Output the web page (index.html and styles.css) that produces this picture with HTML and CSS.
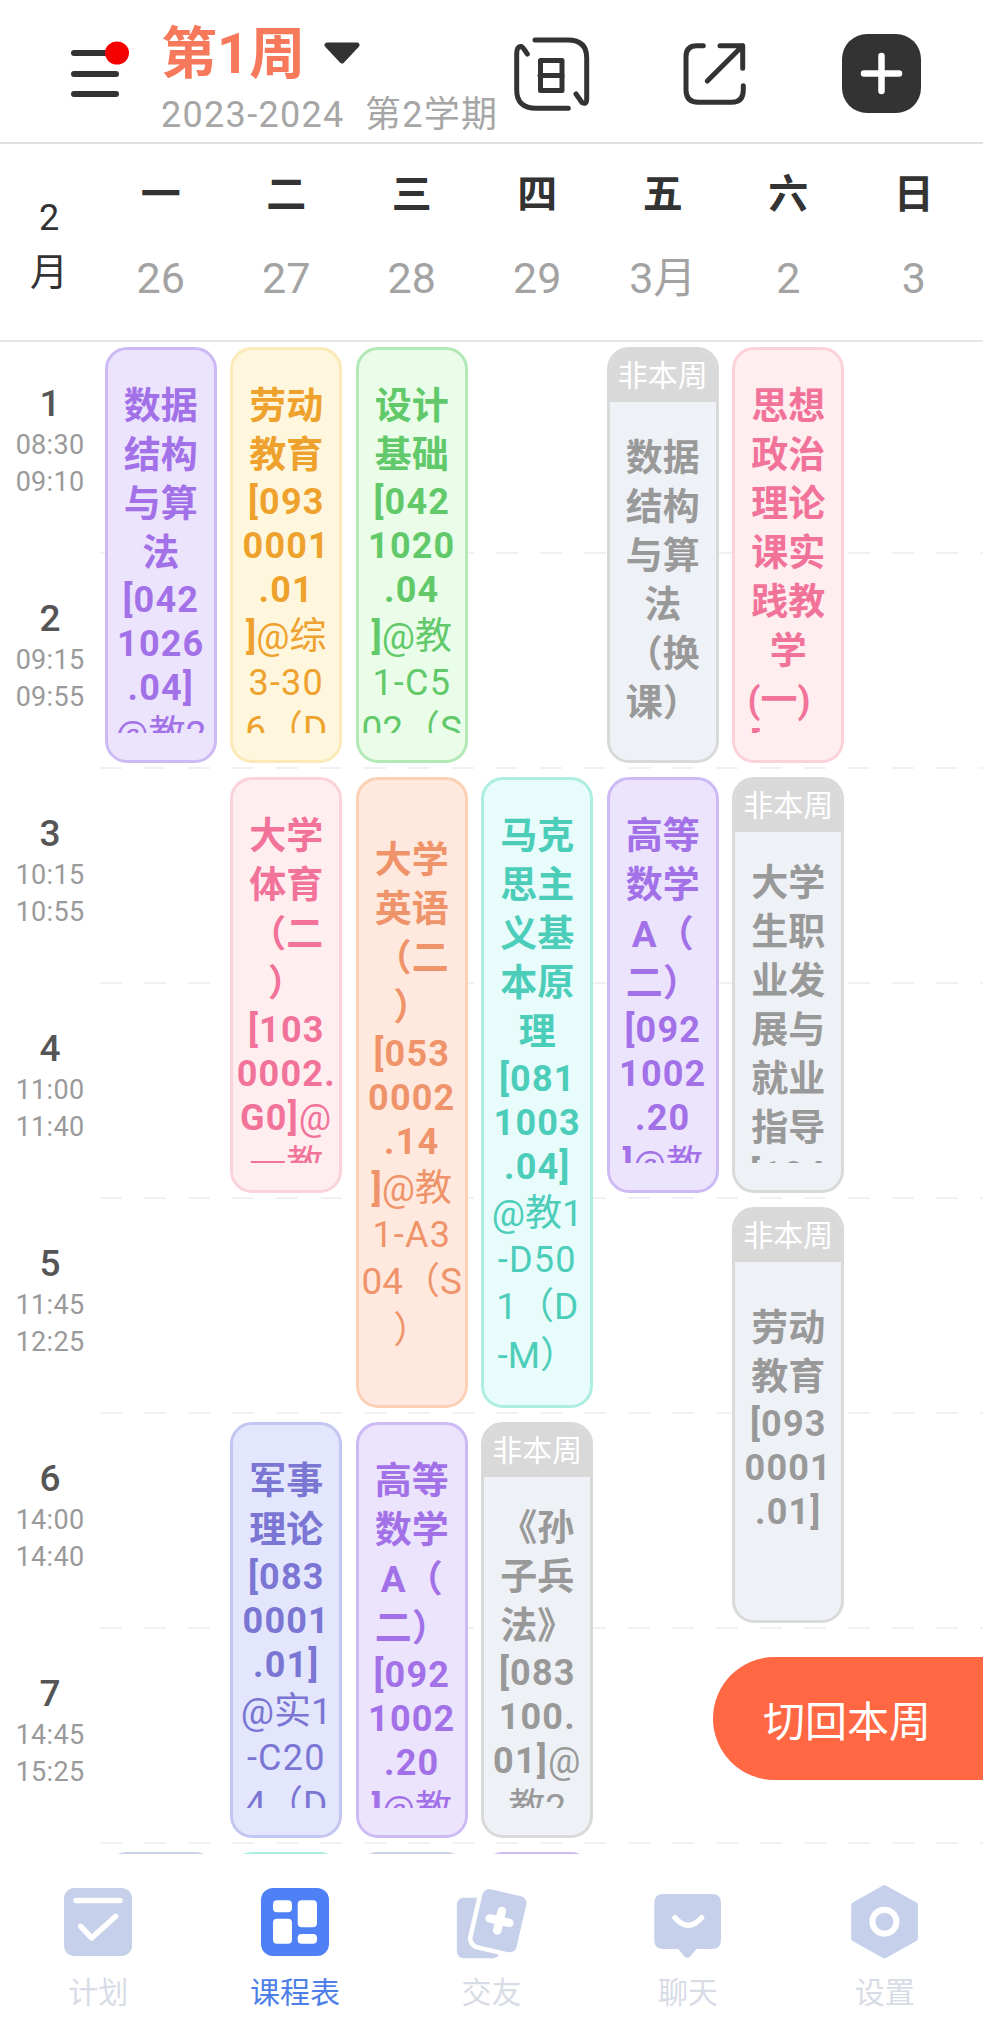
FILE: index.html
```html
<!DOCTYPE html>
<html lang="zh-CN">
<head>
<meta charset="utf-8">
<title>课程表</title>
<link rel="stylesheet" href="styles.css">
</head>
<body>
<div class="page">
  <header class="top">
    <svg class="menu" viewBox="0 0 62 66"><path class="menu-bars" d="M3 12H45M3 33H45M3 53H45"/><ellipse class="menu-dot" cx="46" cy="12" rx="12" ry="11.5"/></svg>
    <div class="heading">
      <div class="week-title"><span class="week-name">第1周</span><svg class="caret" viewBox="0 0 36 22"><polygon points="3,3 33,3 18,19"/></svg></div>
      <div class="term">2023-2024&nbsp;&nbsp;第2学期</div>
    </div>
    <div class="actions">
      <svg class="act act-swap" viewBox="0 0 84 80"><path d="M25 5H58Q76.7 5 76.7 23V64Q76.7 70 72 67.5L66 59M58.3 73.3H26Q6.7 73.3 6.7 55V19Q6.7 11 11 11.5Q13 12 17.3 19"/><rect x="30.5" y="25.5" width="21.5" height="30"/><path d="M30 40.500H52"/></svg>
      <svg class="act act-share" viewBox="0 0 70 70"><path d="M23.300 5.700H16.700Q6 5.700 6 16.700V50Q6 62.300 18.300 62.300H51.700Q63.300 62.300 63.300 50V45.700M27.300 41L62.700 5.700M40 5.700H62.700V28.300"/></svg>
      <svg class="act-add" viewBox="0 0 79 79"><rect class="add-bg" width="79" height="79" rx="25"/><path class="add-mark" d="M39.500 22V57M22 39.500H57"/></svg>
    </div>
  </header>

  <div class="days">
    <div class="month"><span class="month-n">2</span><span class="month-t">月</span></div>
    <div class="day"><b>一</b><span>26</span></div>
    <div class="day"><b>二</b><span>27</span></div>
    <div class="day"><b>三</b><span>28</span></div>
    <div class="day"><b>四</b><span>29</span></div>
    <div class="day"><b>五</b><span>3月</span></div>
    <div class="day"><b>六</b><span>2</span></div>
    <div class="day"><b>日</b><span>3</span></div>
  </div>

  <main class="viewport">
    <div class="grid">
      <div class="rule p1"></div><div class="rule p2"></div><div class="rule p3"></div><div class="rule p4"></div><div class="rule p5"></div><div class="rule p6"></div><div class="rule p7"></div>

      <div class="slot p1"><b>1</b><span>08:30</span><span>09:10</span></div>
      <div class="slot p2"><b>2</b><span>09:15</span><span>09:55</span></div>
      <div class="slot p3"><b>3</b><span>10:15</span><span>10:55</span></div>
      <div class="slot p4"><b>4</b><span>11:00</span><span>11:40</span></div>
      <div class="slot p5"><b>5</b><span>11:45</span><span>12:25</span></div>
      <div class="slot p6"><b>6</b><span>14:00</span><span>14:40</span></div>
      <div class="slot p7"><b>7</b><span>14:45</span><span>15:25</span></div>

      <article class="card purple d1 p1 s2"><div class="clip"><div class="txt">
        <div class="h b">数据</div><div class="h b">结构</div><div class="h b">与算</div><div class="h b">法</div><div class="n b">[042</div><div class="n b">1026</div><div class="n b">.04]</div><div class="h">@教2</div>
      </div></div></article>

      <article class="card yellow d2 p1 s2"><div class="clip"><div class="txt">
        <div class="h b">劳动</div><div class="h b">教育</div><div class="n b">[093</div><div class="n b">0001</div><div class="n b">.01</div><div class="h"><b>]</b>@综</div><div class="n">3-30</div><div class="h">6（D</div>
      </div></div></article>

      <article class="card green d3 p1 s2"><div class="clip"><div class="txt">
        <div class="h b">设计</div><div class="h b">基础</div><div class="n b">[042</div><div class="n b">1020</div><div class="n b">.04</div><div class="h"><b>]</b>@教</div><div class="n">1-C5</div><div class="h">02（S</div>
      </div></div></article>

      <article class="card off d5 p1 s2"><div class="tag">非本周</div><div class="clip"><div class="txt">
        <div class="h b">数据</div><div class="h b">结构</div><div class="h b">与算</div><div class="h b">法</div><div class="h b">（换</div><div class="h b">课）</div>
      </div></div></article>

      <article class="card pink d6 p1 s2"><div class="clip"><div class="txt">
        <div class="h b">思想</div><div class="h b">政治</div><div class="h b">理论</div><div class="h b">课实</div><div class="h b">践教</div><div class="h b">学</div><div class="h b">(一)&nbsp;&nbsp;</div><div class="n b">[031</div>
      </div></div></article>

      <article class="card pink d2 p3 s2"><div class="clip"><div class="txt">
        <div class="h b">大学</div><div class="h b">体育</div><div class="h b">（二</div><div class="h b">）</div><div class="n b">[103</div><div class="n b">0002.</div><div class="n"><b>G0]</b>@</div><div class="h">一教</div>
      </div></div></article>

      <article class="card orange d3 p3 s3"><div class="clip"><div class="txt">
        <div class="h b">大学</div><div class="h b">英语</div><div class="h b">（二</div><div class="h b">）</div><div class="n b">[053</div><div class="n b">0002</div><div class="n b">.14</div><div class="h"><b>]</b>@教</div><div class="n">1-A3</div><div class="h">04（S</div><div class="h">）</div>
      </div></div></article>

      <article class="card teal d4 p3 s3"><div class="clip"><div class="txt">
        <div class="h b">马克</div><div class="h b">思主</div><div class="h b">义基</div><div class="h b">本原</div><div class="h b">理</div><div class="n b">[081</div><div class="n b">1003</div><div class="n b">.04]</div><div class="h">@教1</div><div class="n">-D50</div><div class="h">1（D</div><div class="h">-M）</div>
      </div></div></article>

      <article class="card purple d5 p3 s2"><div class="clip"><div class="txt">
        <div class="h b">高等</div><div class="h b">数学</div><div class="h b">A（</div><div class="h b">二）</div><div class="n b">[092</div><div class="n b">1002</div><div class="n b">.20</div><div class="h"><b>]</b>@教</div>
      </div></div></article>

      <article class="card off d6 p3 s2"><div class="tag">非本周</div><div class="clip"><div class="txt">
        <div class="h b">大学</div><div class="h b">生职</div><div class="h b">业发</div><div class="h b">展与</div><div class="h b">就业</div><div class="h b">指导</div><div class="n b">[104</div>
      </div></div></article>

      <article class="card off d6 p5 s2"><div class="tag">非本周</div><div class="clip"><div class="txt">
        <div class="h b">劳动</div><div class="h b">教育</div><div class="n b">[093</div><div class="n b">0001</div><div class="n b">.01]</div><div class="n">&nbsp;</div>
      </div></div></article>

      <article class="card indigo d2 p6 s2"><div class="clip"><div class="txt">
        <div class="h b">军事</div><div class="h b">理论</div><div class="n b">[083</div><div class="n b">0001</div><div class="n b">.01]</div><div class="h">@实1</div><div class="n">-C20</div><div class="h">4（D</div>
      </div></div></article>

      <article class="card purple d3 p6 s2"><div class="clip"><div class="txt">
        <div class="h b">高等</div><div class="h b">数学</div><div class="h b">A（</div><div class="h b">二）</div><div class="n b">[092</div><div class="n b">1002</div><div class="n b">.20</div><div class="h"><b>]</b>@教</div>
      </div></div></article>

      <article class="card off d4 p6 s2"><div class="tag">非本周</div><div class="clip"><div class="txt">
        <div class="h b">《孙</div><div class="h b">子兵</div><div class="h b">法》</div><div class="n b">[083</div><div class="n b">100.</div><div class="n"><b>01]</b>@</div><div class="h">教2</div>
      </div></div></article>

      <article class="card sliver d1 p8 s2"></article>
      <article class="card teal d2 p8 s2"></article>
      <article class="card sliver d3 p8 s2"></article>
      <article class="card purple d4 p8 s2"></article>
    </div>
  </main>

  <nav class="tabs">
    <div class="tab">
      <svg class="tab-icon" viewBox="-4 -4 76 76"><rect class="fill" width="68" height="68" rx="10"/><path class="cut" d="M12 12.500H56M16.700 38.300L27.700 50L51.700 28.300"/></svg>
      <span>计划</span>
    </div>
    <div class="tab active">
      <svg class="tab-icon" viewBox="-4 -4 76 76"><rect class="fill" width="68" height="68" rx="12"/><rect class="hole" x="12" y="12.300" width="19" height="12" rx="4"/><rect class="hole" x="12" y="30.700" width="19" height="25" rx="4"/><rect class="hole" x="36.700" y="12.300" width="19.300" height="27" rx="4"/><rect class="hole" x="36.700" y="46" width="19.300" height="9.700" rx="4"/></svg>
      <span>课程表</span>
    </div>
    <div class="tab">
      <svg class="tab-icon" viewBox="-1.500 -1 76 76"><rect class="fill" x="2.300" y="12.700" width="43" height="60.600" rx="7"/><rect class="fill cover" x="22.500" y="7" width="45" height="57.400" rx="7" transform="rotate(13 45 35.700)"/><path class="cut plus" d="M35 35.700H55M45 25.700V45.700" transform="rotate(13 45 35.700)"/></svg>
      <span>交友</span>
    </div>
    <div class="tab">
      <svg class="tab-icon" viewBox="-3.300 -7.700 76 76"><path class="fill" d="M10 2.300H58.700Q67.700 2.300 67.700 11.300V48.300Q67.700 57.300 58.700 57.300H43.300L37 64.500Q34 67.500 31 64.500L25 57.300H10Q1 57.300 1 48.300V11.300Q1 2.300 10 2.300Z"/><path class="cut" d="M21.700 26Q35 41 48.300 26"/></svg>
      <span>聊天</span>
    </div>
    <div class="tab">
      <svg class="tab-icon" viewBox="-3.400 0 76 76"><polygon class="fill hex" points="34,4 64.500,21 64.500,54.500 34,71.500 3.800,54.500 3.800,21"/><circle class="ring" cx="34" cy="37.700" r="12"/></svg>
      <span>设置</span>
    </div>
  </nav>

  <button class="back-now" type="button">切回本周</button>
</div>
</body>
</html>
```
FILE: styles.css
```css
* { box-sizing: border-box; }
html, body { margin: 0; padding: 0; background: #fff; }
body { font-family: Roboto, "Noto Sans CJK SC", sans-serif; }

.page {
  position: relative;
  width: 983px;
  height: 2040px;
  display: flex;
  flex-direction: column;
  overflow: hidden;
  background: #fff;
}

/* top bar */
.top {
  flex: none;
  height: 144px;
  display: flex;
  align-items: flex-start;
  padding-left: 71px;
  border-bottom: 2px solid #dedede;
}
.menu { width: 62px; height: 66px; margin-top: 41px; margin-right: 28px; overflow: visible; flex: none; }
.menu-bars { fill: none; stroke: #333; stroke-width: 6; stroke-linecap: round; }
.menu-dot { fill: #f50000; }
.heading { display: flex; flex-direction: column; width: 349px; flex: none; }
.week-title { display: flex; align-items: flex-start; height: 70px; padding-top: 20px; }
.week-name { font-size: 56px; line-height: 68px; font-weight: 700; color: #f5795a; }
.caret { width: 36px; height: 22px; margin-left: 19px; margin-top: 22px; flex: none; }
.caret polygon { fill: #333; stroke: #333; stroke-width: 5; stroke-linejoin: round; }
.term { font-size: 36px; line-height: 44px; margin-top: 23px; color: #a6a6a6; letter-spacing: 1.300px; white-space: nowrap; }
.actions { display: flex; align-items: flex-start; }
.act { flex: none; fill: none; stroke: #333; stroke-width: 5; stroke-linecap: round; stroke-linejoin: round; }
.act rect, .act path { fill: none; }
.act-swap { width: 84px; height: 80px; margin-top: 35px; }
.act-share { width: 70px; height: 70px; margin-top: 40px; margin-left: 86px; }
.act-add { width: 79px; height: 79px; margin-top: 34px; margin-left: 92px; flex: none; }
.add-bg { fill: #333; }
.add-mark { fill: none; stroke: #fff; stroke-width: 6.500; stroke-linecap: round; }

/* weekday strip */
.days {
  flex: none;
  height: 198px;
  display: grid;
  grid-template-columns: 98px repeat(7, 125.500px);
  border-bottom: 2px solid #e6e6e6;
  position: relative;
  z-index: 1;
}
.month { display: flex; flex-direction: column; align-items: center; padding-top: 50px; color: #333; }
.month-n { font-size: 36px; line-height: 48px; }
.month-t { font-size: 38px; line-height: 60px; }
.day { display: flex; flex-direction: column; align-items: center; padding-top: 26px; }
.day b { font-size: 40px; line-height: 50px; font-weight: 700; color: #333; }
.day span { font-size: 43px; line-height: 50px; margin-top: 33px; color: #a3a3a3; white-space: nowrap; }

/* timetable */
.viewport { flex: 1; min-height: 0; overflow: hidden; }
.grid {
  margin-top: -3px;
  display: grid;
  grid-template-columns: 98px repeat(7, 125.500px);
  grid-auto-rows: 215px;
}
.p1 { grid-row-start: 1; }
.p2 { grid-row-start: 2; }
.p3 { grid-row-start: 3; }
.p4 { grid-row-start: 4; }
.p5 { grid-row-start: 5; }
.p6 { grid-row-start: 6; }
.p7 { grid-row-start: 7; }
.p8 { grid-row-start: 8; }
.s2 { grid-row-end: span 2; }
.s3 { grid-row-end: span 3; }
.d1 { grid-column: 2; }
.d2 { grid-column: 3; }
.d3 { grid-column: 4; }
.d4 { grid-column: 5; }
.d5 { grid-column: 6; }
.d6 { grid-column: 7; }

.rule {
  grid-column: 1 / -1;
  align-self: end;
  height: 2px;
  margin-left: 100px;
  margin-right: -10px;
  background: repeating-linear-gradient(90deg, #f1f1f1 0 22px, transparent 22px 44px);
}
.slot {
  grid-column: 1;
  display: flex;
  flex-direction: column;
  align-items: center;
  padding-top: 43px;
  padding-left: 2px;
}
.slot b { font-size: 37px; line-height: 44px; font-weight: 500; color: #555; }
.slot span { font-size: 27px; line-height: 37px; color: #9a9a9a; letter-spacing: .3px; }
.slot b + span { margin-top: 1px; }

.card {
  margin: 8px 6.700px 6px;
  border: 3px solid;
  border-radius: 22px;
  overflow: hidden;
  display: flex;
  flex-direction: column;
  min-height: 0;
  text-align: center;
  position: relative;
}
.clip {
  flex: 1;
  min-height: 0;
  margin: 32px 0 27px;
  overflow: hidden;
  display: flex;
  flex-direction: column;
}
.txt { margin: auto 0; font-size: 37px; white-space: nowrap; }
.h { height: 49px; line-height: 49px; }
.n { height: 44px; line-height: 44px; font-size: 36px; letter-spacing: 1.200px; }
.b, .txt b { font-weight: 700; }

.purple { background: #ece3fd; border-color: #cdbaf5; color: #a271e8; }
.yellow { background: #fff7dd; border-color: #fbe9b8; color: #eea22d; }
.green  { background: #eafde9; border-color: #b2e9b6; color: #62c96a; }
.pink   { background: #ffeef0; border-color: #fbd2da; color: #f2739a; }
.orange { background: #ffe9de; border-color: #fbd0b5; color: #ef946a; }
.teal   { background: #e8fcfb; border-color: #aeeee2; color: #4ccdb9; }
.indigo { background: #e3e6fc; border-color: #c4c6f2; color: #7b76d3; }
.off    { background: #eef1f6; border-color: #d9d9d9; color: #999; }
.sliver { background: #e6e9f5; border-color: #c9d1e4; }

.tag {
  flex: none;
  height: 52px;
  margin: 0;
  background: #d9d9d9;
  color: #fff;
  font-size: 30px;
  line-height: 52px;
  white-space: nowrap;
}
.off .clip { margin-top: 27px; }

/* bottom tabs */
.tabs {
  flex: none;
  height: 186px;
  display: grid;
  grid-template-columns: repeat(5, 1fr);
  padding-top: 30px;
  background: #fff;
  position: relative;
  z-index: 2;
}
.tab { display: flex; flex-direction: column; align-items: center; }
.tab-icon { width: 76px; height: 76px; flex: none; }
.tab span { font-size: 30px; line-height: 30px; margin-top: 18px; color: #d8dce6; }
.tab.active span { color: #4e7fe8; }
.fill { fill: #c6d0ea; }
.active .fill { fill: #4f80f5; }
.hole { fill: #fff; }
.cut { fill: none; stroke: #fff; stroke-width: 5.500; stroke-linecap: round; stroke-linejoin: round; }
.cover { stroke: #fff; stroke-width: 9; paint-order: stroke; }
.plus { stroke-width: 8.500; }
.hex { stroke: #c6d0ea; stroke-width: 6; stroke-linejoin: round; }
.ring { fill: none; stroke: #fff; stroke-width: 6; }

/* floating button */
.back-now {
  position: absolute;
  left: 713px;
  top: 1657px;
  width: 280px;
  height: 123px;
  padding: 0 0 0 50px;
  border: 0;
  border-radius: 62px 0 0 62px;
  background: #ff6843;
  color: #fff;
  font-family: inherit;
  font-size: 42px;
  text-align: left;
  z-index: 3;
}
```
